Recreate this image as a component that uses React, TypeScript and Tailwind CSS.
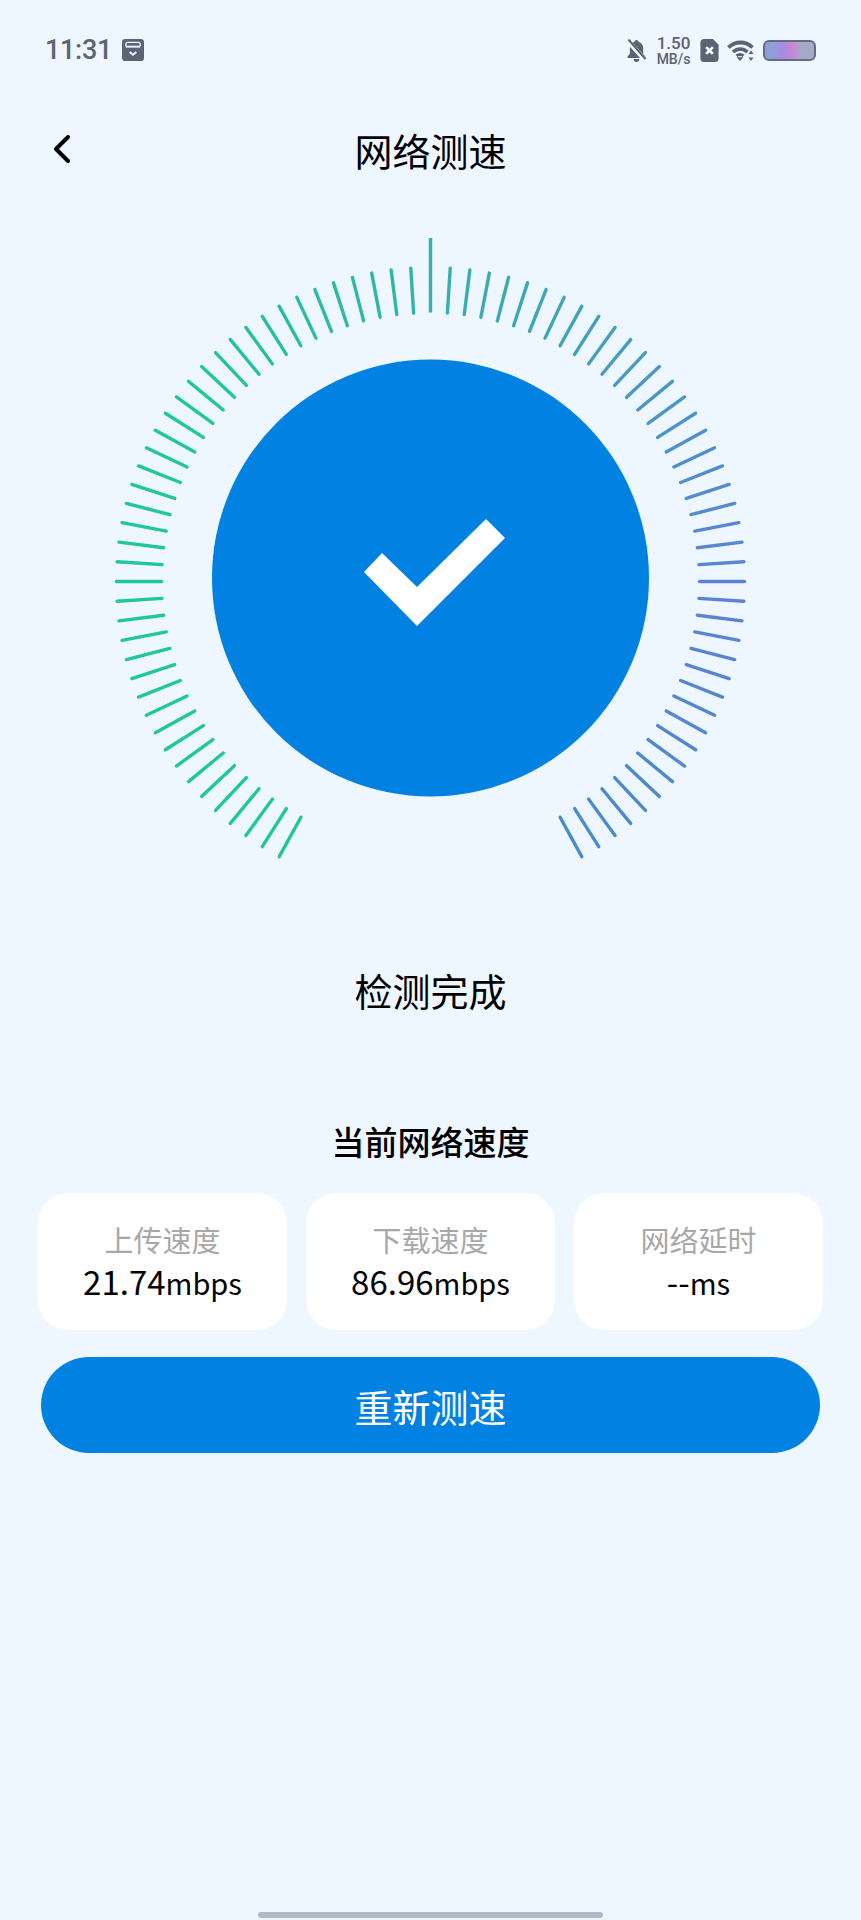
import React from "react";

const CJK = "font-['Noto_Sans_CJK_SC','Noto_Sans',sans-serif]";

const mix = (a: number[], b: number[], t: number) =>
  `rgb(${a.map((v, i) => Math.round(v + (b[i] - v) * t)).join(",")})`;

const GREEN = [31, 198, 158];
const TEAL = [52, 178, 170];
const INDIGO = [92, 130, 214];
const SKY = [74, 140, 200];

// left side stays green, right side goes teal -> indigo -> steel blue
const tickColor = (i: number) => {
  if (i < 0) return mix(TEAL, GREEN, Math.min(1, -i / 14));
  if (i <= 25) return mix(TEAL, INDIGO, i / 25);
  return mix(INDIGO, SKY, (i - 25) / 17);
};

const Gauge = () => {
  const ticks = [];
  for (let i = -42; i <= 42; i++) {
    const a = (i * 3.6 * Math.PI) / 180;
    const outer = i === 0 ? 343.5 : 314;
    const inner = 269;
    ticks.push(
      <line
        key={i}
        x1={430.5 + Math.sin(a) * inner}
        y1={343.5 - Math.cos(a) * inner}
        x2={430.5 + Math.sin(a) * outer}
        y2={343.5 - Math.cos(a) * outer}
        stroke={tickColor(i)}
        strokeWidth={3.4}
        strokeLinecap={i === 0 ? "butt" : "round"}
      />
    );
  }
  return (
    <svg width="861" height="640" viewBox="0 0 861 640" className="block">
      {ticks}
      <circle cx="430.5" cy="340" r="218.5" fill="#0182e2" />
      <path d="M364 334 L382 315 L417 349 L486 281 L505 300 L417 388 Z" fill="#fff" />
    </svg>
  );
};

const StatusBar = () => (
  <div className="h-[72px] pt-[28px] pl-[45px] pr-[45px] flex items-center justify-between text-[#5b6472]">
    <div className="flex items-center gap-[10px]">
      <span className="font-['Roboto',sans-serif] text-[27px] leading-none font-medium tracking-[-0.3px]">11:31</span>
      <svg width="22" height="22" viewBox="0 0 23 23">
        <rect width="23" height="23" rx="3.5" fill="#5b6472" />
        <path d="M4 7.500V5.500a2 2 0 0 1 2-2h11a2 2 0 0 1 2 2v2" fill="none" stroke="#eef6ff" strokeWidth="1.400" />
        <rect x="4" y="7" width="15" height="2" fill="#eef6ff" />
        <path d="M8 13.500l3.500 3 3.500-3" fill="none" stroke="#eef6ff" strokeWidth="2" />
      </svg>
    </div>
    <div className="flex items-center">
      <svg width="19" height="23" viewBox="0 0 20 24" className="mr-[11px]">
        <path d="M10 1c-1.200 0-2 .8-2.100 1.700C4.800 3.600 3 6.300 3 9.500v6L.5 18.500V20h19v-1.500L17 15.500v-6c0-3.200-1.800-5.900-4.900-6.800C12 1.800 11.200 1 10 1zM7 21a3 3 0 0 0 6 0z" fill="#5b6472" />
        <path d="M0 1 L19 22" stroke="#eef6ff" strokeWidth="5" />
        <path d="M1.500 0.500 L19.500 21" stroke="#5b6472" strokeWidth="2.200" />
      </svg>
      <div className="w-[33px] flex flex-col items-center font-['Roboto',sans-serif] mr-[10px] whitespace-nowrap">
        <span className="text-[17px] font-medium leading-[18px]">1.50</span>
        <span className="text-[14px] font-medium leading-[14px]">MB/s</span>
      </div>
      <svg width="19" height="23" viewBox="0 0 19 24" className="mr-[8px]">
        <path d="M4 0h9l6 6v14a4 4 0 0 1-4 4H4a4 4 0 0 1-4-4V4a4 4 0 0 1 4-4z" fill="#5b6472" />
        <path d="M6 8.500l7 7M13 8.500l-7 7" stroke="#fff" strokeWidth="2.800" />
      </svg>
      <svg width="27" height="21" viewBox="0 0 27 21" className="mr-[9px]">
        <path d="M1.500 7.500C8 .8 19 .8 25.500 7.500" fill="none" stroke="#5b6472" strokeWidth="3.800" />
        <path d="M6 12c4.500-4 10-4 14.500 0" fill="none" stroke="#5b6472" strokeWidth="3.600" />
        <path d="M9.500 15.800c2.500-1.800 4.500-1.800 7 0" fill="none" stroke="#5b6472" strokeWidth="3" />
        <path d="M9.500 17.200h7l-3.500 3.800z" fill="#5b6472" />
        <path d="M24 10.500l-2.500 3.500h5zM24 21l-2.500-3.500h5z" fill="#5b6472" />
      </svg>
      <div className="w-[53px] h-[21px] rounded-[6px] border-[2.5px] border-[#626d83] bg-[linear-gradient(90deg,#8d9fd8_0%,#8d9fd8_15%,#a98ae0_35%,#c98ad0_60%,#a3abc8_75%,#a3abc8_100%)]" />
    </div>
  </div>
);

const Stat = ({ label, value, unit }: { label: string; value: string; unit: string }) => (
  <div className="flex-1 h-[137px] rounded-[30px] bg-white flex flex-col items-center pt-[27px]">
    <div className="text-[29px] leading-[38px] text-[#a8a8a8]">{label}</div>
    <div className="text-black leading-[38px] mt-[4px] whitespace-nowrap">
      <span className="text-[33px]">{value}</span>
      <span className="text-[29px]">{unit}</span>
    </div>
  </div>
);

export default function App() {
  return (
    <div className={`${CJK} w-[861px] h-[1920px] bg-[#eef6ff] relative overflow-hidden`}>
      <StatusBar />
      <div className="h-[90px] mt-[33px] relative flex items-center justify-center">
        <svg width="20" height="30" viewBox="0 0 20 30" className="absolute left-[52px] top-[29px]">
          <path d="M16 3 L4 15 L16 27" fill="none" stroke="#000" strokeWidth="4" strokeLinecap="round" strokeLinejoin="round" />
        </svg>
        <h1 className="text-[38px] leading-none text-black font-normal">网络测速</h1>
      </div>
      <div className="mt-[43px]">
        <Gauge />
      </div>
      <div className="mt-[87px] text-center text-[38px] leading-[50px] text-black">检测完成</div>
      <div className="mt-[104px] text-center text-[33px] leading-[44px] text-black font-medium">当前网络速度</div>
      <div className="mt-[30px] px-[38px] flex gap-[19px]">
        <Stat label="上传速度" value="21.74" unit="mbps" />
        <Stat label="下载速度" value="86.96" unit="mbps" />
        <Stat label="网络延时" value="--" unit="ms" />
      </div>
      <button className="mt-[27px] ml-[41px] w-[779px] h-[96px] rounded-full bg-[#0182e2] text-white text-[38px] block">
        重新测速
      </button>
      <div className="absolute left-[258px] top-[1912px] w-[345px] h-[6px] rounded-full bg-[#b0b8c4]" />
    </div>
  );
}
